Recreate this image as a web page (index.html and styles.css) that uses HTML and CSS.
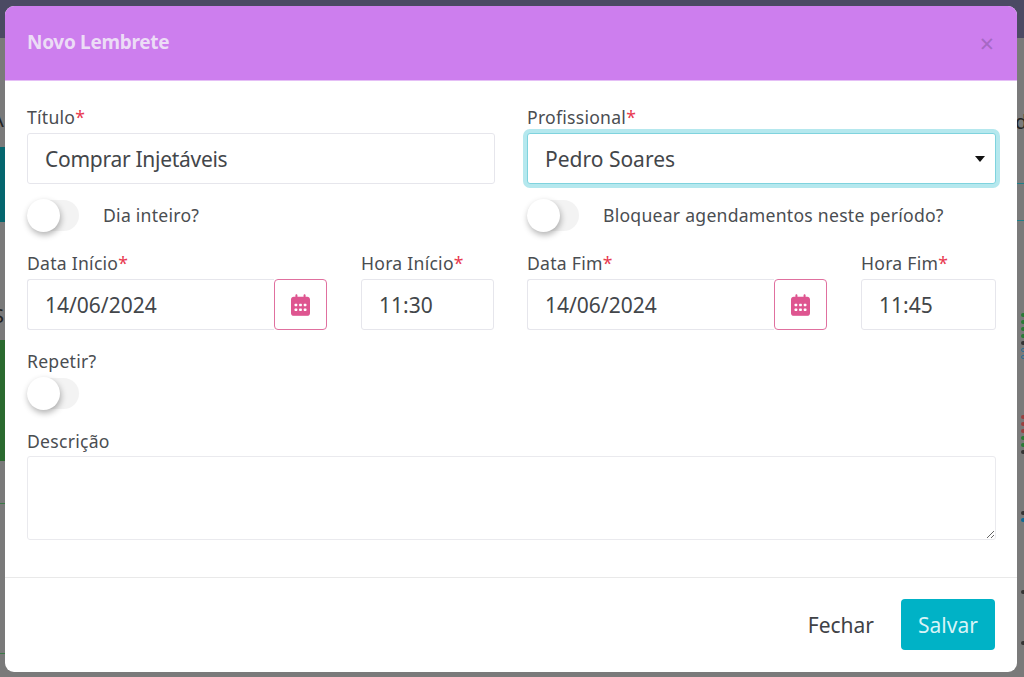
FILE: index.html
```html
<!DOCTYPE html>
<html lang="pt">
<head>
<meta charset="utf-8">
<title>Novo Lembrete</title>
<link rel="stylesheet" href="styles.css">
</head>
<body>
<div class="backdrop">
  <div class="bg-top"></div>
  <div class="bg-teal"></div>
  <div class="bg-green"></div>
  <div class="bg-line bg-line-l1"></div>
  <div class="bg-line bg-line-l2"></div>
  <div class="bg-line bg-line-r1"></div>
  <div class="bg-line bg-line-r2"></div>
  <span class="bg-text bg-text-a">A</span>
  <span class="bg-text bg-text-s">S</span>
  <span class="bg-text bg-text-d">d</span>
  <div class="dots dots-a"><i class="g"></i><i class="g"></i><i class="g"></i><i class="g"></i><i class="k"></i><i class="b"></i><i class="b"></i></div>
  <div class="dots dots-b"><i class="r"></i><i class="r"></i><i class="r"></i><i class="g"></i><i class="g"></i><i class="k"></i></div>
  <div class="dots dots-c"><i class="k"></i><i class="f"></i></div>
  <div class="dots dots-d"><i class="k"></i></div>
  <div class="dots dots-e"><i class="k"></i></div>
</div>
<div class="modal">
  <header class="modal-header">
    <h5 class="modal-title">Novo Lembrete</h5>
    <span class="modal-close">×</span>
  </header>
  <form class="modal-body">
    <div class="row">
      <div class="col">
        <label class="label">Título<span class="req">*</span></label>
        <div class="input tight">Comprar Injetáveis</div>
        <div class="switch-line">
          <span class="switch"><span class="knob"></span></span>
          <span class="switch-text">Dia inteiro?</span>
        </div>
      </div>
      <div class="col">
        <label class="label">Profissional<span class="req">*</span></label>
        <div class="input select">Pedro Soares<span class="caret"></span></div>
        <div class="switch-line">
          <span class="switch"><span class="knob"></span></span>
          <span class="switch-text">Bloquear agendamentos neste período?</span>
        </div>
      </div>
    </div>
    <div class="row row-dates">
      <div class="date-pair">
        <div class="col">
          <label class="label">Data Início<span class="req">*</span></label>
          <div class="group">
            <div class="input grow">14/06/2024</div>
            <button type="button" class="cal-btn">
              <svg class="cal" viewBox="0 0 448 512"><path d="M152 24c0-13-11-24-24-24s-24 11-24 24v40H64C29 64 0 93 0 128v16 48V448c0 35 29 64 64 64h320c35 0 64-29 64-64V192v-48-16c0-35-29-64-64-64h-40V24c0-13-11-24-24-24s-24 11-24 24v40H152V24zM48 192h352v256c0 0 0 16-16 16H64c-16 0-16-16-16-16V192z"/><path d="M20 180h408v272c0 30-14 44-44 44H64c-30 0-44-14-44-44z"/><g fill="#fff"><rect x="84" y="228" width="64" height="56" rx="14"/><rect x="192" y="228" width="64" height="56" rx="14"/><rect x="300" y="228" width="64" height="56" rx="14"/><rect x="84" y="340" width="64" height="56" rx="14"/><rect x="192" y="340" width="64" height="56" rx="14"/><rect x="300" y="340" width="64" height="56" rx="14"/></g></svg>
            </button>
          </div>
        </div>
        <div class="col">
          <label class="label">Hora Início<span class="req">*</span></label>
          <div class="input">11:30</div>
        </div>
      </div>
      <div class="date-pair date-pair-end">
        <div class="col">
          <label class="label">Data Fim<span class="req">*</span></label>
          <div class="group">
            <div class="input grow">14/06/2024</div>
            <button type="button" class="cal-btn">
              <svg class="cal" viewBox="0 0 448 512"><path d="M152 24c0-13-11-24-24-24s-24 11-24 24v40H64C29 64 0 93 0 128v16 48V448c0 35 29 64 64 64h320c35 0 64-29 64-64V192v-48-16c0-35-29-64-64-64h-40V24c0-13-11-24-24-24s-24 11-24 24v40H152V24zM48 192h352v256c0 0 0 16-16 16H64c-16 0-16-16-16-16V192z"/><path d="M20 180h408v272c0 30-14 44-44 44H64c-30 0-44-14-44-44z"/><g fill="#fff"><rect x="84" y="228" width="64" height="56" rx="14"/><rect x="192" y="228" width="64" height="56" rx="14"/><rect x="300" y="228" width="64" height="56" rx="14"/><rect x="84" y="340" width="64" height="56" rx="14"/><rect x="192" y="340" width="64" height="56" rx="14"/><rect x="300" y="340" width="64" height="56" rx="14"/></g></svg>
            </button>
          </div>
        </div>
        <div class="col">
          <label class="label">Hora Fim<span class="req">*</span></label>
          <div class="input">11:45</div>
        </div>
      </div>
    </div>
    <div class="repeat">
      <label class="label">Repetir?</label>
      <span class="switch"><span class="knob"></span></span>
    </div>
    <div class="desc">
      <label class="label">Descrição</label>
      <textarea class="textarea"></textarea>
    </div>
  </form>
  <footer class="modal-footer">
    <button type="button" class="btn btn-link">Fechar</button>
    <button type="button" class="btn btn-save">Salvar</button>
  </footer>
</div>
</body>
</html>
```
FILE: styles.css
```css
* { box-sizing: border-box; }
html, body { margin: 0; height: 100%; overflow: hidden; }
body {
  background: #7a7a7a;
  font-family: "Noto Sans", "Open Sans", sans-serif;
  color: #3f4246;
}
.backdrop { position: absolute; inset: 0; overflow: hidden; }
.bg-top { position: absolute; left: 0; right: 0; top: 0; height: 38px; background: #4b4a63; }
.bg-teal { position: absolute; left: 0; width: 5px; top: 147px; height: 75px; background: #05666e; }
.bg-green { position: absolute; left: 0; width: 5px; top: 340px; height: 121px; background: #2b6a2f; }
.bg-line { position: absolute; height: 1px; }
.bg-line-l1 { left: 0; width: 5px; top: 503px; background: #3d7a48; }
.bg-line-l2 { left: 0; width: 5px; top: 653px; background: #3d7a48; }
.bg-line-r1 { right: 0; width: 7px; top: 183px; background: #1f7f89; }
.bg-line-r2 { right: 0; width: 7px; top: 220px; background: #1f7f89; }
.bg-text { position: absolute; font-size: 20px; line-height: 20px; color: #222; }
.bg-text-a { left: -9px; top: 110px; }
.bg-text-s { left: -7px; top: 306px; }
.bg-text-d { left: 1015px; top: 112px; }
.dots { position: absolute; left: 1021px; display: flex; flex-direction: column; gap: 3px; }
.dots i { display: block; width: 6px; height: 4px; border-radius: 2px 0 0 2px; }
.dots .g { background: #2a7a35; }
.dots .k { background: #333; }
.dots .r { background: #9a4040; }
.dots .b { background: #7a7a7a; border: 1px solid #2f6f96; }
.dots .f { background: #0f6a96; }
.dots-a { top: 313px; }
.dots-b { top: 415px; }
.dots-c { top: 511px; }
.dots-d { top: 590px; }
.dots-e { top: 641px; }

.modal {
  position: absolute;
  left: 5px;
  top: 6px;
  width: 1012px;
  height: 666px;
  background: #fff;
  border-radius: 9px;
  overflow: hidden;
  display: flex;
  flex-direction: column;
}
.modal-header {
  height: 75px;
  flex: none;
  background: #cd7eee;
  border-bottom: 1px solid #e5bff6;
  padding: 0 22px;
  display: flex;
  align-items: center;
  justify-content: space-between;
}
.modal-title {
  margin: 0;
  font-size: 19px;
  font-weight: 700;
  color: #ecdcf6;
  letter-spacing: -0.3px;
  position: relative;
  top: -1px;
}
.modal-close {
  font-size: 25px;
  line-height: 1;
  font-weight: 400;
  color: #a668c4;
  margin-right: 1px;
}
.modal-body {
  flex: 1;
  padding: 24px 22px 0;
  display: flex;
  flex-direction: column;
}
.row { display: grid; grid-template-columns: 468px 469px; column-gap: 32px; }
.row-dates { margin-top: 19px; }
.col { display: flex; flex-direction: column; min-width: 0; }
.date-pair { display: grid; grid-template-columns: 300px 133px; column-gap: 34px; }
.date-pair-end { grid-template-columns: 300px 135px; }
.label {
  font-size: 17.6px;
  letter-spacing: .25px;
  line-height: 24px;
  height: 24px;
  margin-bottom: 4px;
  color: #4a4d51;
}
.req { color: #e8394f; }
.input {
  height: 51px;
  border: 1px solid #e6e6ec;
  border-radius: 3px;
  padding: 0 17px;
  font-size: 21px;
  line-height: 50px;
  color: #43464a;
  background: #fff;
}
.tight { letter-spacing: -.28px; }
.select {
  position: relative;
  border-color: #7fd3de;
  box-shadow: 0 0 0 4px #b5e8ee;
}
.caret {
  position: absolute;
  right: 10px;
  top: 22px;
  width: 0;
  height: 0;
  border-left: 5px solid transparent;
  border-right: 5px solid transparent;
  border-top: 6px solid #111;
}
.switch-line { display: flex; align-items: center; margin-top: 15px; height: 33px; }
.switch-text {
  margin-left: 24px;
  font-size: 17.6px;
  letter-spacing: .25px;
  color: #4a4d51;
  position: relative;
  top: -1px;
}
.switch {
  display: block;
  position: relative;
  width: 52px;
  height: 31px;
  background: #f3f3f3;
  border-radius: 16px;
  flex: none;
}
.knob {
  position: absolute;
  left: 0;
  top: -1px;
  width: 33px;
  height: 33px;
  border-radius: 50%;
  background: #fff;
  box-shadow: 1px 3px 6px rgba(0,0,0,.3);
}
.group { display: flex; }
.grow { flex: 1; border-right: 0; border-radius: 3px 0 0 3px; }
.cal-btn {
  width: 53px;
  height: 51px;
  padding: 0;
  border: 1px solid #e0709f;
  border-radius: 4px;
  background: #fff;
  display: flex;
  align-items: center;
  justify-content: center;
}
.cal { width: 19px; height: 22px; fill: #de5590; }
.repeat { margin-top: 19px; display: flex; flex-direction: column; }
.repeat .label { margin-bottom: 5px; }
.desc { margin-top: 20px; display: flex; flex-direction: column; }
.desc .label { margin-bottom: 3px; }
.textarea {
  display: block;
  height: 84px;
  width: 969px;
  border: 1px solid #eaeaee;
  border-radius: 3px;
  resize: vertical;
  outline: 0;
  background: #fff;
}
.modal-footer {
  height: 95px;
  flex: none;
  border-top: 1px solid #e9e9e9;
  padding: 21px 22px 0;
  display: flex;
  justify-content: flex-end;
  align-items: flex-start;
}
.btn {
  height: 51px;
  font: inherit;
  font-size: 21px;
  border: 0;
  border-radius: 4px;
  background: none;
  padding: 0;
}
.btn-link { color: #3f4246; margin-right: 27px; }
.btn-save { width: 94px; background: #00b2c6; color: #d8f4f7; }
```
